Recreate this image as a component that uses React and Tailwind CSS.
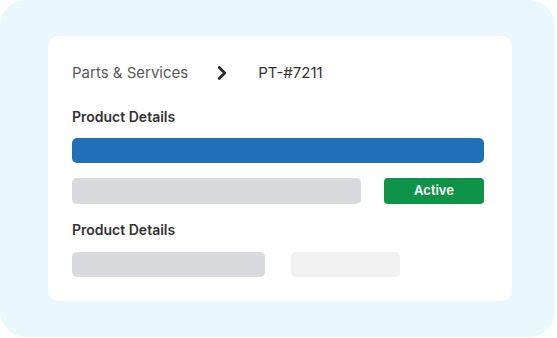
import { FiChevronRight } from 'react-icons/fi'

export default function App() {
  return (
    <div className="w-[557px] h-[338px] bg-white" style={{ fontFamily: 'Inter, "Noto Sans", sans-serif' }}>
      <div className="w-[555px] h-[337px] rounded-[26px] bg-[#eaf7fd] pt-[36px] pl-[48px]">
        <div className="w-[464px] h-[265px] rounded-[10px] bg-white pl-[24px] pr-[28px] pt-[27px]">
          {/* Breadcrumb */}
          <div className="flex items-center h-[20px] text-[15px]">
            <span className="text-[#5a5a5a]">Parts &amp; Services</span>
            <FiChevronRight className="ml-[23px] text-[#2a2a2a] text-[22px]" strokeWidth={3} />
            <span className="ml-[25px] text-[#333]">PT-#7211</span>
          </div>

          <div className="mt-[25px] h-[18px] leading-[18px] text-[14px] font-semibold text-[#333]">Product Details</div>
          <div className="mt-[12px] h-[25px] w-[412px] rounded-[5px] bg-[#1f70b8]" />

          <div className="mt-[15px] flex gap-[23px]">
            <div className="h-[26px] w-[289px] rounded-[5px] bg-[#d9dadd]" />
            <div className="h-[26px] w-[100px] rounded-[4px] bg-[#0d9448] flex items-center justify-center text-white text-[13px] font-semibold">
              Active
            </div>
          </div>

          <div className="mt-[17px] h-[18px] leading-[18px] text-[14px] font-semibold text-[#333]">Product Details</div>
          <div className="mt-[13px] flex gap-[26px]">
            <div className="h-[25px] w-[193px] rounded-[5px] bg-[#d9dadd]" />
            <div className="h-[25px] w-[109px] rounded-[5px] bg-[#f1f1f2]" />
          </div>
        </div>
      </div>
    </div>
  )
}
